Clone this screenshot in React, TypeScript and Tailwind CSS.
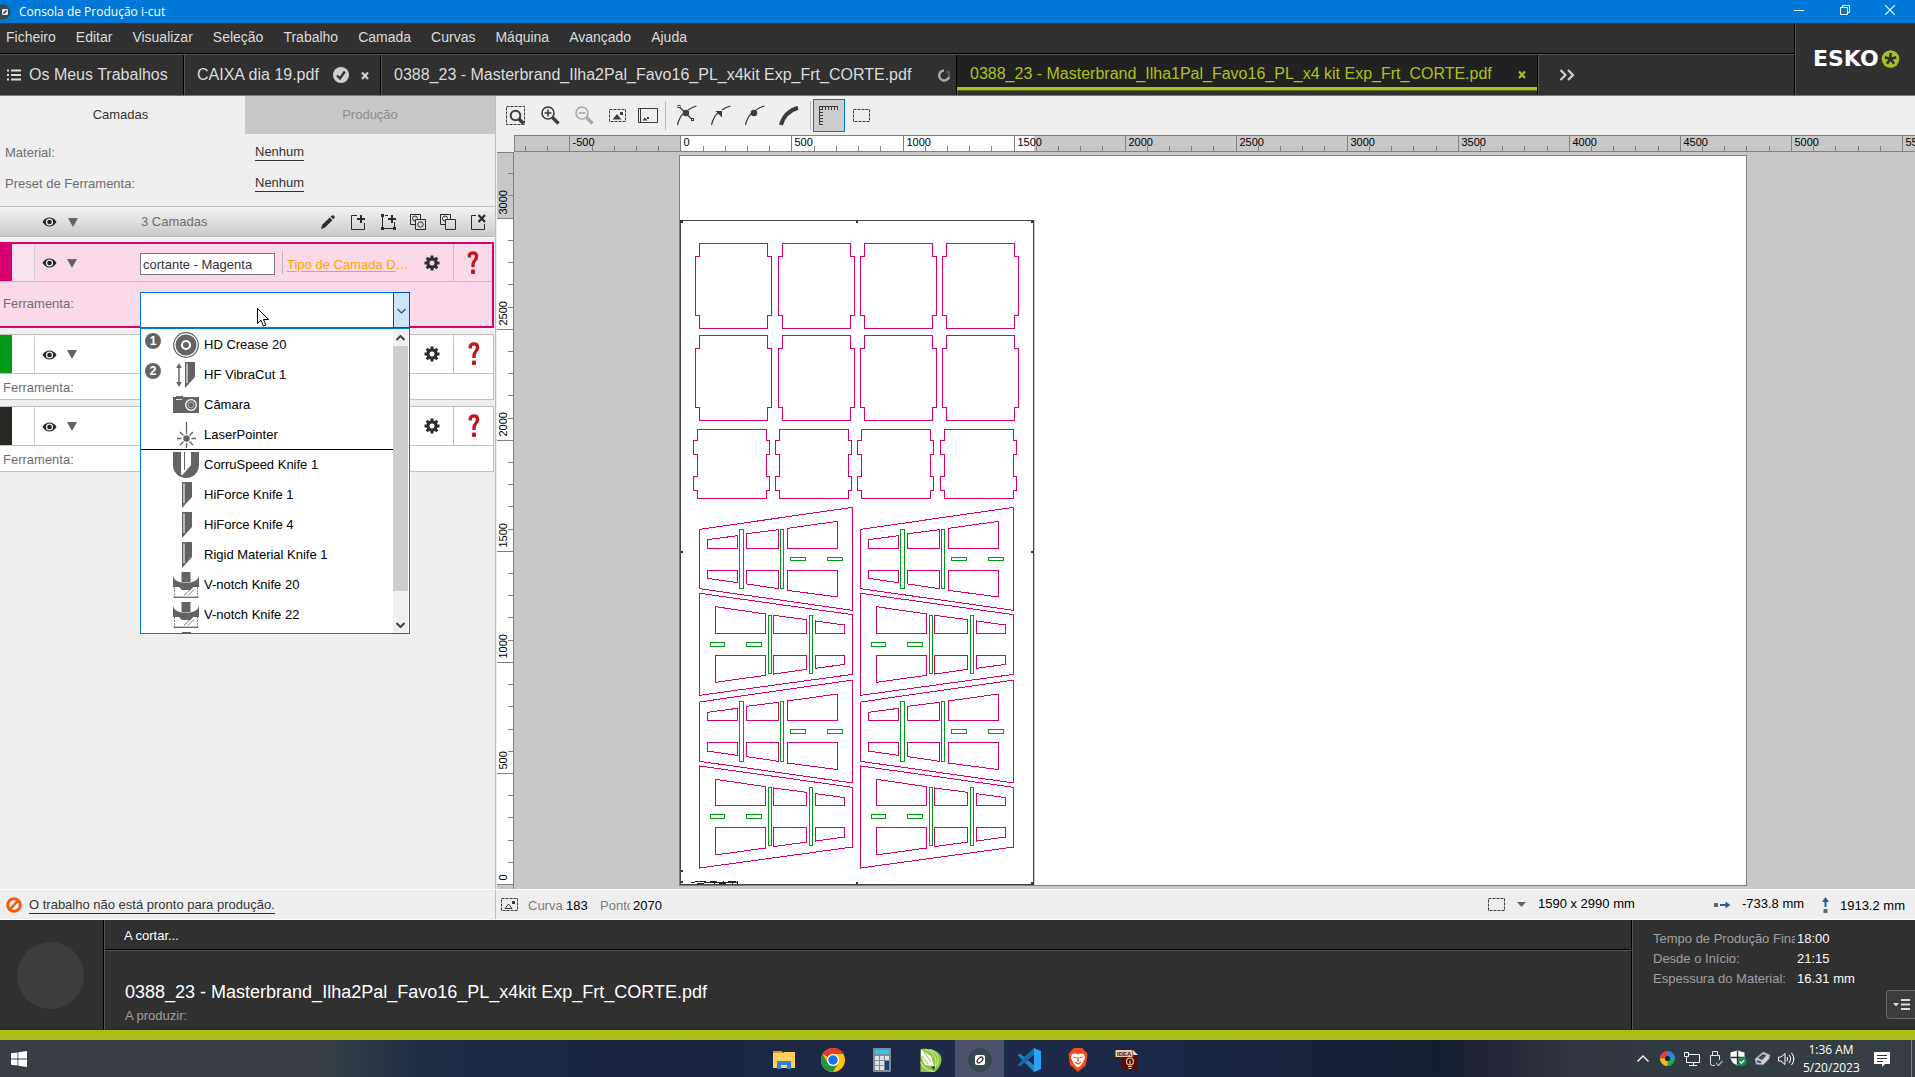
import React from "react";

const ARIAL = "font-['Liberation_Sans',Arial,sans-serif]";
const SEGOE = "font-['Open_Sans','Noto_Sans',sans-serif]";

type Kids = { children?: React.ReactNode };

/* ---------- small icons ---------- */

function Ico({ w, h, children, label }: Kids & { w: number; h: number; label?: string }) {
  return (
    <svg width={w} height={h} viewBox={`0 0 ${w} ${h}`} fill="none" className="block shrink-0" aria-label={label}>
      {children}
    </svg>
  );
}

const Eye = () => (
  <Ico w={15} h={10}>
    <path d="M0.500 5C2.500 1.800 5 0.600 7.500 0.600S12.500 1.800 14.500 5C12.500 8.200 10 9.400 7.500 9.400S2.500 8.200 0.500 5Z" fill="#222" />
    <circle cx="7.500" cy="5" r="3.600" fill="#f0f0f0" />
    <circle cx="7.500" cy="5" r="2.300" fill="#222" />
  </Ico>
);

const Tri = ({ w = 10, h = 9 }: { w?: number; h?: number }) => (
  <Ico w={w} h={h}>
    <path d={`M0 0H${w}L${w / 2} ${h}Z`} fill="#636363" />
  </Ico>
);

const Gear = () => (
  <Ico w={16} h={16}>
    <g stroke="#2e2e2e">
      <circle cx="8" cy="8" r="4.100" strokeWidth="3.200" />
      {[0, 45, 90, 135].map((a) => (
        <g key={a} transform={`rotate(${a} 8 8)`} strokeWidth="3">
          <path d="M8 0.500V3.500M8 12.500V15.500" />
        </g>
      ))}
    </g>
  </Ico>
);

const Question = () => (
  <Ico w={12} h={24}>
    <path d="M2.300 6.500V4.500C2.300 2.700 3.800 1.900 6 1.900C8.300 1.900 9.600 3.200 9.600 5.600C9.600 9.200 6 9.800 6 13.200V16" stroke="#c4141c" strokeWidth="3.300" />
    <rect x="4" y="18.500" width="4" height="4.500" rx="1" fill="#c4141c" />
  </Ico>
);

const Pencil = () => (
  <Ico w={14} h={14}>
    <path d="M0 14L1.200 9.800L8.800 2.600L11.400 5.200L4 12.600Z" fill="#2b2b2b" />
    <path d="M9.700 1.800L11.400 0.300C12.500 0 14 1.500 13.700 2.700L12.200 4.300Z" fill="#2b2b2b" />
  </Ico>
);

const AddLayer = () => (
  <Ico w={16} h={16}>
    <path d="M7 1.500H1.500V15.500H14.500V9" stroke="#2b2b2b" />
    <path d="M11 1V9M7 5H15" stroke="#2b2b2b" strokeWidth="2" />
  </Ico>
);
const AddSel = () => (
  <Ico w={16} h={16}>
    <path d="M2.500 1.500V14M5 1.500H8M2 14.500H15M14.500 15V8" stroke="#2b2b2b" />
    <path d="M1 0H4V3H1ZM1 13H4V16H1ZM13 13H16V16H13Z" fill="#2b2b2b" />
    <path d="M12 1V9M8 5H16" stroke="#2b2b2b" strokeWidth="2" />
  </Ico>
);
const DupLayer = () => (
  <Ico w={16} h={16}>
    <path d="M5 10.500H0.500V0.500H10.500V5M5.500 5.500H15.500V15.500H5.500Z" stroke="#2b2b2b" />
    <path d="M5 7A2.500 2.500 0 1 1 7.500 4.500" stroke="#2b2b2b" />
    <circle cx="10.500" cy="10.500" r="2.700" stroke="#2b2b2b" />
  </Ico>
);
const MoveLayer = () => (
  <Ico w={16} h={16}>
    <path d="M5 10.500H0.500V0.500H10.500V5M5.500 5.500H15.500V15.500H5.500Z" stroke="#2b2b2b" />
    <path d="M5 7A2.500 2.500 0 1 1 7.500 4.500" stroke="#2b2b2b" />
  </Ico>
);
const DelLayer = () => (
  <Ico w={16} h={16}>
    <path d="M6 1.500H1.500V15.500H14.500V10" stroke="#2b2b2b" />
    <path d="M8.500 1L15 8M15 1L8.500 8" stroke="#2b2b2b" strokeWidth="2.200" />
  </Ico>
);

/* ---------- toolbar icons ---------- */

const G = "#3c3c3c";
const ZoomRect = () => (
  <Ico w={20} h={20}>
    <rect x="0.500" y="0.500" width="18" height="18" stroke={G} strokeDasharray="3 1" />
    <circle cx="9.500" cy="9.500" r="4.800" stroke={G} strokeWidth="2" />
    <path d="M13 13L17.500 17.500" stroke={G} strokeWidth="3.500" />
  </Ico>
);
const Zoom = ({ plus, c }: { plus?: boolean; c: string }) => (
  <Ico w={19} h={19}>
    <circle cx="7" cy="7" r="6" stroke={c} strokeWidth="1.600" />
    <path d={plus ? "M3.500 7H10.500M7 3.500V10.500" : "M3.500 7H10.500"} stroke={c} strokeWidth="1.600" />
    <path d="M11.500 11.500L17.500 17.500" stroke={c} strokeWidth="3.400" />
  </Ico>
);
const ImgIcon = () => (
  <Ico w={18} h={14}>
    <rect x="0.500" y="0.500" width="16" height="12" stroke={G} strokeDasharray="3 1" />
    <path d="M3.500 10.500L8 5L12.500 10.500Z" fill={G} />
    <rect x="11" y="3" width="3" height="3" fill={G} />
  </Ico>
);
const PageIcon = () => (
  <Ico w={20} h={16}>
    <path d="M0.500 0.500H19.500V14.500H0.500ZM2.500 0.500V14.500" stroke={G} />
    <path d="M4.500 12.500L7 9.500L9.500 12.500Z" fill={G} />
    <rect x="9" y="9" width="2" height="2" fill={G} />
  </Ico>
);
const Node = ({ kind }: { kind: number }) => (
  <Ico w={20} h={21}>
    <path d="M0.500 20C2 13.500 4.500 10 7 8M11 5C13.500 3 16.500 1.800 19.500 1" stroke={G} strokeWidth="1.200" />
    {kind === 0 && (
      <>
        <path d="M3 2.500L15 14.500" stroke={G} strokeWidth="1.200" />
        <rect x="1" y="0.500" width="2" height="2" stroke={G} />
        <rect x="14.500" y="13.500" width="2" height="2" stroke={G} />
        <circle cx="9" cy="8" r="3.200" fill={G} />
      </>
    )}
    {kind === 1 && <path d="M4.500 6H11V12.500Z" fill={G} />}
    {kind === 2 && <circle cx="9" cy="8" r="3.300" fill={G} />}
  </Ico>
);
const Arc = () => (
  <Ico w={20} h={20}>
    <path d="M2 19C4 11 10 4.500 19 1.800" stroke={G} strokeWidth="4" />
  </Ico>
);
const RulerIcon = () => (
  <Ico w={20} h={20}>
    <path d="M0 0.500H19M0.500 0V19" stroke={G} />
    <path d="M3.500 1V4M6.500 1V4M9.500 1V4M12.500 1V4M15.500 1V4M18.500 1V4M1 3.500H4M1 6.500H4M1 9.500H4M1 12.500H4M1 15.500H4M1 18.500H4" stroke={G} />
  </Ico>
);
const DashRect = () => (
  <Ico w={18} h={14}>
    <rect x="0.500" y="0.500" width="16" height="12" stroke={G} strokeDasharray="3 1" />
  </Ico>
);

/* ---------- tool icons ---------- */

const T = "#636363";
const blade = (x: number) => (
  <>
    <path d={`M${x} 0H${x + 10}V15L${x} 26Z`} fill={T} />
    <path d={`M${x + 2} 1.500V21`} stroke="#e8e8e8" strokeWidth="1.300" />
  </>
);
function ToolIcon({ kind }: { kind: string }) {
  return (
    <Ico w={26} h={26}>
      {kind === "crease" && (
        <>
          <circle cx="13" cy="13" r="12.300" stroke={T} strokeWidth="1.200" />
          <circle cx="13" cy="13" r="10.500" fill={T} />
          <circle cx="13" cy="13" r="4" stroke="#fff" strokeWidth="2" />
        </>
      )}
      {kind === "vibra" && (
        <>
          {blade(12)}
          <path d="M6 3V23" stroke={T} strokeWidth="1.500" />
          <path d="M6 1L8.800 6H3.200ZM6 25L8.800 20H3.200Z" fill={T} />
        </>
      )}
      {kind === "camera" && (
        <>
          <path d="M0 5H3V4H10V5H26V21H0Z" fill={T} />
          <path d="M3 7.500H9" stroke="#ddd" />
          <circle cx="18" cy="13" r="5.300" stroke="#fff" strokeWidth="1.300" />
          <circle cx="18" cy="13" r="2.900" fill={T} stroke="#fff" strokeWidth="0.500" />
        </>
      )}
      {kind === "laser" && (
        <>
          <circle cx="13.500" cy="16.500" r="3.200" fill={T} />
          <path d="M13.500 0V12M13.500 21V26M4 16.500H8.500M18.500 16.500H23M7 10L10.500 13.500M20 10L16.500 13.500M7 23L10.500 19.500M20 23L16.500 19.500" stroke={T} strokeWidth="1.300" />
        </>
      )}
      {kind === "corru" && (
        <>
          <path d="M0 0H26V13A13 13 0 0 1 0 13Z" fill={T} />
          <path d="M8 0H18V13L9 23.500L8 22Z" fill="#fff" />
          <path d="M11.500 0V18" stroke={T} />
        </>
      )}
      {kind === "knife" && blade(9)}
      {kind === "vnotch" && (
        <>
          <path d="M8.500 0H17.500V10H8.500Z" fill={T} />
          <path d="M0 3.500C1 8 4 9.500 8.500 10.500H17.500C22 9.500 25 8 26 3.500V15H20L17 18H9L6 15H0Z" fill={T} />
          <path d="M1.500 15V25M24.500 15V25" stroke="#888" strokeDasharray="2 1" />
          <path d="M11 23.500L20 15M15 23.500L21 17.500" stroke="#777" />
          <path d="M0.500 25.300H25.500" stroke="#666" strokeWidth="1.300" />
        </>
      )}
    </Ico>
  );
}

/* ---------- header ---------- */

function TitleBar() {
  return (
    <div className="flex h-[23px] shrink-0 items-center bg-[#0078d7] text-white">
      <Ico w={11} h={16}>
        <circle cx="3" cy="8" r="7.500" fill="#3c484c" />
        <rect x="2" y="5" width="6" height="6" rx="1" fill="#e8e8e8" />
        <path d="M3.500 9.500L6.500 6.500" stroke="#333" strokeWidth="1.500" />
      </Ico>
      <span className={`${SEGOE} ml-2 text-xs`}>Consola de Produção i-cut</span>
      <div className="ml-auto flex h-full pb-[3px]">
        <button aria-label="Minimizar" className="grid w-[46px] place-items-center"><Ico w={10} h={10}><path d="M0 5.500H10" stroke="#fff" /></Ico></button>
        <button aria-label="Restaurar" className="grid w-[45px] place-items-center"><Ico w={10} h={10}><path d="M0.500 2.500H7.500V9.500H0.500ZM2.500 2.500V0.500H9.500V7.500H7.500" stroke="#fff" /></Ico></button>
        <button aria-label="Fechar" className="mr-[2px] grid w-[46px] place-items-center"><Ico w={10} h={10}><path d="M0.300 0.300L9.700 9.700M9.700 0.300L0.300 9.700" stroke="#fff" strokeWidth="1.100" /></Ico></button>
      </div>
    </div>
  );
}

const MENU = ["Ficheiro", "Editar", "Visualizar", "Seleção", "Trabalho", "Camada", "Curvas", "Máquina", "Avançado", "Ajuda"];

function CloseX({ c = "#d0d0d0" }: { c?: string }) {
  return (
    <button aria-label="Fechar separador" className="grid h-5 w-3 place-items-center">
      <Ico w={8} h={9}><path d="M1 1.500L7 8M7 1.500L1 8" stroke={c} strokeWidth="2.200" /></Ico>
    </button>
  );
}

const tabCls = "flex items-center border-r border-black pl-[13px] pr-3 shadow-[1px_0_0_#555] whitespace-nowrap";

function Header() {
  return (
    <div className="flex h-[73px] shrink-0 border-b border-[#777] bg-[#303030] text-[#dcdcdc]">
      <div className="flex min-w-0 flex-1 flex-col">
        <nav className="flex h-[31px] items-center gap-5 border-b border-black pb-[2px] pl-[6px] text-sm">
          {MENU.map((m) => (
            <button key={m}>{m}</button>
          ))}
        </nav>
        <div className="flex flex-1 border-t border-[#555] text-base">
          <div className="flex w-[184px] items-center border-r border-black pl-[7px] shadow-[1px_0_0_#555]">
            <Ico w={14} h={12}>
              <path d="M0 1.500H2M4 1.500H14M0 6H2M4 6H14M0 10.500H2M4 10.500H14" stroke="#dcdcdc" strokeWidth="1.800" />
            </Ico>
            <button className="ml-2 whitespace-nowrap pb-px">Os Meus Trabalhos</button>
          </div>
          <div className={`${tabCls} w-[197px]`}>
            <button className="pb-px">CAIXA dia 19.pdf</button>
            <span className="ml-[14px] mr-3">
              <Ico w={16} h={16}>
                <circle cx="8" cy="8" r="8" fill="#cfcfcf" />
                <path d="M4 8.500L7 11.500L11.800 4.500" stroke="#333" strokeWidth="2.400" />
              </Ico>
            </span>
            <CloseX />
          </div>
          <div className={`${tabCls} w-[576px]`}>
            <button className="pb-px">0388_23 - Masterbrand_Ilha2Pal_Favo16_PL_x4kit Exp_Frt_CORTE.pdf</button>
            <span className="ml-auto -mr-2">
              <Ico w={15} h={15}>
                <path d="M7 2.500A5 5 0 1 0 12 9" stroke="#aaa" strokeWidth="2.500" />
                <path d="M12 9A5 5 0 0 0 9.500 3.200" stroke="#5a5a5a" strokeWidth="2.500" />
              </Ico>
            </span>
          </div>
          <div className="flex w-[581px] flex-col border-r border-black shadow-[1px_0_0_#555]">
            <div className="flex flex-1 items-center whitespace-nowrap border-b-[3px] border-[#adc11b] bg-[#212121] pl-[13px] pr-[9px] pt-[6px] text-[#adc11b]">
              <button>0388_23 - Masterbrand_Ilha1Pal_Favo16_PL_x4 kit Exp_Frt_CORTE.pdf</button>
              <span className="ml-auto flex"><CloseX c="#adc11b" /></span>
            </div>
            <div className="h-[5px] border-t border-[#5f6a10]" />
          </div>
          <button aria-label="Mais separadores" className="pl-[21px]">
            <Ico w={16} h={12}>
              <path d="M1.500 1L6.500 6L1.500 11M9 1L14 6L9 11" stroke="#cfcfcf" strokeWidth="2.200" />
            </Ico>
          </button>
        </div>
      </div>
      <div className="flex w-[121px] shrink-0 items-center border-l border-black pl-[18px] shadow-[inset_1px_0_0_#555]">
        <span className="font-['DejaVu_Sans',sans-serif] text-[22px] font-bold leading-6 text-white">ESKO</span>
        <Ico w={22} h={18}>
          <circle cx="11.500" cy="9" r="8.800" fill="#a5bf2b" />
          {[0, 72, 144, 216, 288].map((a) => (
            <path key={a} d="M11.500 9V3" stroke="#303030" strokeWidth="2.600" transform={`rotate(${a} 11.500 9)`} />
          ))}
        </Ico>
      </div>
    </div>
  );
}

/* ---------- layers panel ---------- */

const TOOLS: { name: string; kind: string; badge?: number }[] = [
  { name: "HD Crease 20", kind: "crease", badge: 1 },
  { name: "HF VibraCut 1", kind: "vibra", badge: 2 },
  { name: "Câmara", kind: "camera" },
  { name: "LaserPointer", kind: "laser" },
  { name: "CorruSpeed Knife 1", kind: "corru" },
  { name: "HiForce Knife 1", kind: "knife" },
  { name: "HiForce Knife 4", kind: "knife" },
  { name: "Rigid Material Knife 1", kind: "knife" },
  { name: "V-notch Knife 20", kind: "vnotch" },
  { name: "V-notch Knife 22", kind: "vnotch" },
];

const Chevron = ({ up, bold }: { up?: boolean; bold?: boolean }) => (
  <Ico w={9} h={6}>
    <path d={up ? "M0.500 5L4.500 1L8.500 5" : "M0.500 1L4.500 5L8.500 1"} stroke="#444" strokeWidth={bold ? 2 : 1.1} />
  </Ico>
);

function ToolPicker() {
  return (
    <div className="absolute left-[140px] top-[10px] z-10 w-[270px]">
      <div className="relative h-9 border border-[#0078d7] bg-white">
        <select id="tool-1" className="h-full w-full appearance-none bg-white outline-none">
          <option value=""></option>
        </select>
        <span className="pointer-events-none absolute -right-px -top-px grid h-9 w-[17px] place-items-center border border-[#005499] bg-[#cce4f7] pt-[2px]">
          <Chevron />
        </span>
      </div>
      <div className="-mt-px flex h-[307px] overflow-hidden border border-t-2 border-[#0078d7] bg-white">
        <ul role="listbox" aria-label="Ferramentas" className="flex-1 pt-px text-[13px] text-black">
          {TOOLS.map((t, i) => (
            <li key={t.name} role="option" aria-selected={false} className={`flex h-[30px] pt-[2px] ${i === 4 ? "shadow-[0_-1px_0_#000]" : ""}`}>
              <span className="flex w-8 pl-1">
                {t.badge && (
                  <span className="mt-px grid h-4 w-4 place-items-center rounded-full bg-[#636363] text-xs font-bold leading-none text-white">{t.badge}</span>
                )}
              </span>
              <ToolIcon kind={t.kind} />
              <span className="ml-[5px] leading-[26px]">{t.name}</span>
            </li>
          ))}
          <li className="flex justify-start pl-[41px] pt-[2px]"><span className="h-3 w-[9px] bg-[#636363]" /></li>
        </ul>
        <div className="mr-px flex w-[15px] flex-col items-center bg-[#f0f0f0]">
          <span className="grid h-[17px] place-items-center"><Chevron up bold /></span>
          <span className="h-[245px] w-full bg-[#cdcdcd]" />
          <span className="mt-[31px]"><Chevron bold /></span>
        </div>
      </div>
    </div>
  );
}

function Layer({ swatch, active, n }: { swatch: string; active?: boolean; n: number }) {
  return (
    <section className={active ? "relative border-y-2 border-r-2 border-[#d6006f] bg-[#fad9e9]" : "border-y border-r border-[#c0c0c0] bg-white"}>
      <div className={`flex items-stretch border-b border-[#c0c0c0] ${active ? "h-[38px]" : "h-[39px]"}`}>
        <span className={`w-3 ${swatch}`} />
        <span className={`w-[23px] border-r border-[#d5cdd1] ${active ? "bg-[#f8e2ee]" : ""}`} />
        <button aria-label="Visibilidade" className="grid w-[29px] place-items-center pt-px"><Eye /></button>
        <button aria-label="Expandir" className="grid w-[15px] place-items-center pt-px"><Tri /></button>
        <span className="w-[61px]" />
        {active ? (
          <>
            <input
              aria-label="Nome da camada"
              defaultValue="cortante - Magenta"
              className="mt-[9px] h-[22px] w-[135px] border border-[#777] bg-white px-[2px] text-[13px] text-[#333] outline-none"
            />
            <span className="ml-[7px] mt-[7px] h-[23px] w-px bg-[#c0b4ba]" />
            <a href="#tipo" className="ml-1 mt-[11px] w-[123px] overflow-hidden whitespace-nowrap text-[13px] text-[#ffa500]">
              <span className="underline underline-offset-2">Tipo de Camada D</span>…
            </a>
          </>
        ) : (
          <span className="w-[270px]" />
        )}
        <button aria-label="Definições" className="ml-auto grid w-[42px] place-items-center"><Gear /></button>
        <button aria-label="Ajuda da camada" className={`grid place-items-center border-l border-[#c0c0c0] ${active ? "w-[39px]" : "w-10"}`}><Question /></button>
      </div>
      <div className={active ? "relative h-11" : "h-[25px]"}>
        <label htmlFor={`tool-${n}`} className={`block pl-[3px] text-[13px] text-[#6e6e6e] ${active ? "pt-3" : "pt-1"}`}>Ferramenta:</label>
        {active && <ToolPicker />}
        {active && (
          <span className="pointer-events-none absolute left-[257px] top-[26px] z-20">
            <Ico w={12} h={19}>
              <path d="M0.500 0.500V15.500L4 12.200L6.500 18L9 17L6.500 11.500H11.500Z" fill="#fff" stroke="#000" />
            </Ico>
          </span>
        )}
      </div>
    </section>
  );
}

function PresetRow({ label }: { label: string }) {
  return (
    <div className="flex h-[31px] items-center">
      <span className="w-[250px] text-[#6e6e6e]">{label}</span>
      <a href="#preset" className="border-b border-[#333] leading-4 text-[#333]">Nenhum</a>
    </div>
  );
}

function Panel() {
  const actions = [
    { l: "Editar", i: <Pencil /> },
    { l: "Nova camada", i: <AddLayer /> },
    { l: "Camada da seleção", i: <AddSel /> },
    { l: "Duplicar", i: <DupLayer /> },
    { l: "Mover", i: <MoveLayer /> },
    { l: "Eliminar", i: <DelLayer /> },
  ];
  return (
    <aside className="w-[496px] shrink-0 border-r border-[#bdbdbd] bg-[#efefef] text-[13px]">
      <div className="flex h-[38px]">
        <button className="w-[245px] pr-1 text-[#333]">Camadas</button>
        <button className="flex-1 bg-[#c8c8c8] text-[#8c8c8c]">Produção</button>
      </div>
      <div className="border-b border-[#bdbdbd] pb-[7px] pl-[5px] pt-[3px]">
        <PresetRow label="Material:" />
        <PresetRow label="Preset de Ferramenta:" />
      </div>
      <div className="flex h-[30px] border-b border-[#b8b8b8] bg-linear-to-b from-[#f4f4f4] to-[#cacaca] pl-[35px] pr-[2px]">
        <button aria-label="Visibilidade de todas" className="grid w-[29px] place-items-center pt-px"><Eye /></button>
        <button aria-label="Expandir todas" className="grid w-[17px] place-items-center pt-px"><Tri /></button>
        <span className="ml-[60px] self-center pt-px text-[#6e6e6e]">3 Camadas</span>
        <div className="ml-auto flex">
          {actions.map((a) => (
            <button key={a.l} aria-label={a.l} className="grid w-[30px] place-items-center">{a.i}</button>
          ))}
        </div>
      </div>
      <div className="mr-px flex flex-col gap-[6px] border-t border-white pt-[4px]">
        <Layer n={1} active swatch="bg-[#d6006f]" />
        <Layer n={2} swatch="bg-[#009a17]" />
        <Layer n={3} swatch="bg-[#2a2925]" />
      </div>
    </aside>
  );
}

/* ---------- drawing area ---------- */

function Toolbar() {
  const b = "grid w-[34px] place-items-center";
  return (
    <div className="flex h-[39px] shrink-0 items-stretch bg-[#efefef] pl-[2px]">
      <button aria-label="Zoom à seleção" className={b}><ZoomRect /></button>
      <button aria-label="Ampliar" className={b}><Zoom plus c={G} /></button>
      <button aria-label="Reduzir" className={b}><Zoom c="#a8a8a8" /></button>
      <button aria-label="Ajustar desenho" className={b}><ImgIcon /></button>
      <button aria-label="Ajustar mesa" className="grid w-[26px] place-items-center"><PageIcon /></button>
      <span className="mx-1 my-[5px] w-px bg-[#bbb]" />
      <button aria-label="Nó suave" className={b}><Node kind={0} /></button>
      <button aria-label="Nó de canto" className={b}><Node kind={1} /></button>
      <button aria-label="Nó simples" className={b}><Node kind={2} /></button>
      <button aria-label="Curva" className={b}><Arc /></button>
      <span className="my-[5px] ml-1 mr-[2px] w-px bg-[#bbb]" />
      <button aria-label="Réguas" aria-pressed="true" className="my-[3px] grid w-8 place-items-center border border-[#0078d7] bg-[#cccccc]"><RulerIcon /></button>
      <button aria-label="Seleção" className={b}><DashRect /></button>
    </div>
  );
}

const PX = 0.2221;

function HRuler() {
  const ticks: number[] = [];
  for (let v = -700; v <= 5900; v += 100) ticks.push(v);
  return (
    <svg className="block h-[17px] w-full bg-[#c8c8c8]" shapeRendering="crispEdges">
      <rect x="167" y="0" width="353" height="17" fill="#fff" />
      <path d="M0 0.500H3000M0 16.500H3000M0.500 0V17" stroke="#808080" />
      {ticks.map((v) => {
        const x = Math.round(166.4 + v * PX) + 0.5;
        const major = v % 500 === 0;
        return (
          <g key={v}>
            <path d={`M${x} ${major ? 0 : 11}V16`} stroke="#808080" />
            {major && <text x={x + 3} y="11" fontSize="11" fill="#000">{v}</text>}
          </g>
        );
      })}
    </svg>
  );
}

function VRuler() {
  const ticks: number[] = [];
  for (let v = 0; v <= 3200; v += 100) ticks.push(v);
  return (
    <svg className="block w-[17px] shrink-0 bg-[#c8c8c8]" shapeRendering="crispEdges">
      <rect x="0" y="67" width="17" height="665" fill="#fff" />
      <path d="M16.500 0V3000M0 0.500H17" stroke="#808080" />
      {ticks.map((v) => {
        const y = Math.round(732 - v * PX) + 0.5;
        const major = v % 500 === 0;
        return (
          <g key={v}>
            <path d={`M${major ? 0 : 11} ${y}H16`} stroke="#808080" />
            {major && <text transform={`translate(10 ${y - 4}) rotate(-90)`} fontSize="11" fill="#000">{v}</text>}
          </g>
        );
      })}
    </svg>
  );
}

const TRAP_UP = [
  "89,118 548,52 548,361 89,296",
  "112,149 203,137 203,175 112,175",
  "112,241 203,241 203,278 112,265",
  "230,131 326,119 326,175 230,175",
  "230,241 326,241 326,296 230,282",
  "352,115 503,94 503,175 352,175",
  "352,241 503,241 503,321 352,301",
];
const SLOT_UP = ["208,118 220,118 220,296 208,296", "331,118 341,118 341,296 331,296", "361,202 407,202 407,212 361,212", "472,202 518,202 518,212 472,212"];
const TRAP_DN = [
  "89,310 548,374 548,553 89,616",
  "136,350 287,372 287,430 136,430",
  "136,496 287,496 287,556 136,577",
  "311,376 410,389 410,430 311,430",
  "311,496 410,496 410,538 311,552",
  "437,393 524,405 524,430 437,430",
  "437,496 524,496 524,523 437,535",
];
const SLOT_DN = ["295,376 305,376 305,550 295,550", "418,376 428,376 428,550 418,550", "121,457 164,457 164,469 121,469", "229,457 275,457 275,469 229,469"];

function Drawing() {
  return (
    <svg className="block min-w-0 flex-1 bg-[#c8c8c8]" shapeRendering="crispEdges" fill="none" aria-label="Desenho">
      <rect x="165.500" y="3.500" width="1067" height="730" fill="#fff" stroke="#808080" />
      <rect x="166.500" y="68.500" width="353" height="664" stroke="#444" />
      <path d="M520.500 68V733" stroke="#ccc" />
      <path d="M166 68H169V71H166ZM342 69H344V71H342ZM517 69H519V71H517ZM167 399H169V401H167ZM517 399H519V401H517ZM167 718H169V720H167ZM167 729H169V731H167ZM342 730H344V732H342ZM517 730H519V732H517Z" fill="#333" />
      <path d="M177 730.500H181M181 729.500H192M183 731.500H190M190 730.500H224M196 729.500H203M200 732V729M205 731.500H212M214 729.500H222M223.500 729V733M209 729V732M218 730V732" stroke="#222" />
      <g stroke="#d6006f">
        {[0, 92].map((dy) =>
          [0, 83, 165, 247].map((dx) => (
            <path key={`${dx}-${dy}`} transform={`translate(${dx} ${dy})`} d="M185.500 91.500H253.500V104.500H257.500V163.500H253.500V176.500H185.500V163.500H181.500V104.500H185.500Z" />
          ))
        )}
        {[0, 82, 164, 247].map((dx) => (
          <path key={dx} transform={`translate(${dx} 0)`} d="M183.500 277.500H252.500V288.500H255.500V302.500H252.500V324.500H255.500V338.500H252.500V346.500H183.500V338.500H179.500V324.500H183.500V302.500H179.500V288.500H183.500Z" />
        ))}
      </g>
      {[0, 518].map((dy) =>
        [0, 483].map((dx) => (
          <g key={`${dx}-${dy}`} transform={`translate(${156 + dx / 3} ${338 + dy / 3}) scale(0.33333)`}>
            {[...TRAP_UP, ...TRAP_DN].map((p) => (
              <polygon key={p} points={p} stroke="#d6006f" vectorEffect="non-scaling-stroke" />
            ))}
            {[...SLOT_UP, ...SLOT_DN].map((p) => (
              <polygon key={p} points={p} stroke="#009a17" vectorEffect="non-scaling-stroke" />
            ))}
          </g>
        ))
      )}
    </svg>
  );
}

function Workspace() {
  return (
    <main className="ml-px flex min-w-0 flex-1 flex-col bg-[#efefef]">
      <Toolbar />
      <div className="shrink-0 overflow-hidden pl-[17px]"><HRuler /></div>
      <div className="flex min-h-0 flex-1">
        <VRuler />
        <Drawing />
      </div>
    </main>
  );
}

/* ---------- status and production ---------- */

function StatusBar() {
  return (
    <div className="flex h-[31px] shrink-0 border-y border-white bg-[#efefef] text-[13px] text-black">
      <div className="flex w-[496px] shrink-0 items-center gap-[7px] border-r border-[#bdbdbd] pl-[6px] pt-px">
        <Ico w={16} h={16}>
          <circle cx="8" cy="8" r="6.300" stroke="#f4590b" strokeWidth="3" />
          <path d="M4.500 12L11.500 4" stroke="#f4590b" strokeWidth="2.600" />
        </Ico>
        <a href="#estado" className="border-b border-[#333] leading-4 text-[#333]">O trabalho não está pronto para produção.</a>
      </div>
      <div className="flex flex-1 items-center pl-[5px]">
        <Ico w={18} h={14}>
          <rect x="0.500" y="0.500" width="16" height="12" stroke={G} strokeDasharray="3 1" />
          <path d="M4 10.500L7.500 6L11 10.500Z" stroke={G} />
          <rect x="11" y="3" width="3" height="3" fill={G} />
        </Ico>
        <span className="ml-[9px] w-9 overflow-hidden whitespace-nowrap pt-[3px] text-[#7a7a7a]">Curva:</span>
        <span className="ml-[2px] w-[34px] pt-[3px]">183</span>
        <span className="w-[30px] overflow-hidden whitespace-nowrap pt-[3px] text-[#7a7a7a]">Pontos:</span>
        <span className="ml-[3px] pt-[3px]">2070</span>
        <span className="ml-auto"><DashRect /></span>
        <button aria-label="Unidades" className="ml-[11px]"><Tri w={9} h={5} /></button>
        <span className="ml-3 w-[176px] whitespace-nowrap pb-px">1590 x 2990 mm</span>
        <Ico w={17} h={8}>
          <path d="M0 2H4V6H0Z" fill="#666" />
          <path d="M6 4H12" stroke="#2b5c9b" strokeWidth="2" />
          <path d="M11.500 0.500L16.500 4L11.500 7.500Z" fill="#2b5c9b" />
        </Ico>
        <span className="ml-[11px] w-20 whitespace-nowrap pb-px">-733.8 mm</span>
        <Ico w={7} h={16}>
          <path d="M1.500 12H5.500V16H1.500Z" fill="#666" />
          <path d="M3.500 10V4" stroke="#2b5c9b" strokeWidth="2" />
          <path d="M0 5L3.500 0L7 5Z" fill="#2b5c9b" />
        </Ico>
        <span className="ml-[11px] mr-[10px] whitespace-nowrap pt-[2px]">1913.2 mm</span>
      </div>
    </div>
  );
}

function Production() {
  const rows = [
    ["Tempo de Produção Final:", "18:00"],
    ["Desde o Início:", "21:15"],
    ["Espessura do Material:", "16.31 mm"],
  ];
  return (
    <div className="flex h-[110px] shrink-0 bg-[#303030] text-[13px] text-white">
      <div className="grid w-[104px] place-items-center border-r border-black pr-[3px] shadow-[1px_0_0_#555]">
        <span className="h-[67px] w-[67px] rounded-full bg-[#3d3d3d]" />
      </div>
      <div className="ml-px flex flex-1 flex-col">
        <div className="flex h-[30px] items-center border-b border-black pl-[19px] pt-[3px]">A cortar...</div>
        <div className="flex-1 border-t border-[#555] pl-5 pt-[30px]">
          <div className="text-lg leading-[22px]">0388_23 - Masterbrand_Ilha2Pal_Favo16_PL_x4kit Exp_Frt_CORTE.pdf</div>
          <div className="mt-[3px] leading-5 text-[#a0a0a0]">A produzir:</div>
        </div>
      </div>
      <div className="relative w-[284px] shrink-0 border-l border-black pl-[21px] pt-[9px] shadow-[inset_1px_0_0_#555]">
        {rows.map(([k, v]) => (
          <div key={k} className="flex h-5 items-center">
            <span className="w-[142px] overflow-hidden whitespace-nowrap text-[#a0a0a0]">{k}</span>
            <span className="ml-[2px]">{v}</span>
          </div>
        ))}
        <button aria-label="Opções" className="absolute right-0 top-[70px] grid h-[29px] w-[29px] place-items-center rounded-l border border-r-0 border-[#6a6a6a] bg-[#3c3c3c]">
          <Ico w={17} h={11}>
            <path d="M0 4H6L3 7.500Z" fill="#dcdcdc" />
            <path d="M8 1H17M8 5.500H17M8 10H17" stroke="#dcdcdc" strokeWidth="2" />
          </Ico>
        </button>
      </div>
    </div>
  );
}

/* ---------- taskbar ---------- */

const APPS: { name: string; icon: React.ReactNode; active?: boolean }[] = [
  {
    name: "Explorador",
    icon: (
      <Ico w={24} h={24}>
        <path d="M1 3H10L11 5H1Z" fill="#e19b16" />
        <path d="M1 5H11L12 4H23V20H1Z" fill="#fcd05c" />
        <path d="M5 21V13H19V21H15V17H9V21Z" fill="#2b88d8" />
      </Ico>
    ),
  },
  {
    name: "Chrome",
    icon: (
      <Ico w={24} h={24}>
        <circle cx="12" cy="12" r="12" fill="#fbc116" />
        <path d="M1.600 6A12 12 0 0 1 22.400 6H12A6 6 0 0 0 6.800 9Z" fill="#e33b2e" />
        <path d="M1.600 6A12 12 0 0 0 12 24L17.200 15A6 6 0 0 1 6.800 15Z" fill="#229342" />
        <circle cx="12" cy="12" r="6" fill="#fff" />
        <circle cx="12" cy="12" r="4.700" fill="#1a73e8" />
      </Ico>
    ),
  },
  {
    name: "Calculadora",
    icon: (
      <Ico w={18} h={24}>
        <rect width="18" height="24" rx="1" fill="#7f8a93" />
        <rect x="2" y="2" width="14" height="4" fill="#32c5f4" />
        <path d="M2 8H6V12H2ZM7 8H11V12H7ZM12 8H16V12H12ZM2 13H6V17H2ZM7 13H11V17H7ZM2 18H6V22H2ZM7 18H11V22H7Z" fill="#dfe3e6" />
        <rect x="12" y="13" width="4" height="9" fill="#14427c" />
      </Ico>
    ),
  },
  {
    name: "CorelDRAW",
    icon: (
      <Ico w={22} h={24}>
        <path d="M0.500 1C10 0 21.500 3 21.500 11C21.500 17 18 21 15 24H0.500Z" fill="#8cc63e" />
        <path d="M10 1.500C17 4 20 9 17 18M5 1C14 4 18 10 15 20M0.500 14C3 20 8 22 14 24" stroke="#c9e59b" strokeWidth="1.200" />
        <path d="M1 2L11 8L14 18L5 17L1 8Z" fill="#fff" />
        <path d="M4 4L11 14M2 8L8 16" stroke="#8cc63e" />
        <path d="M11 19L15 18L14 22Z" fill="#333" />
      </Ico>
    ),
  },
  {
    name: "i-cut",
    active: true,
    icon: (
      <Ico w={24} h={24}>
        <circle cx="12" cy="12" r="12" fill="#37474f" />
        <rect x="7" y="7" width="10" height="10" rx="2" fill="#fff" />
        <ellipse cx="12" cy="12" rx="3.500" ry="2" transform="rotate(-45 12 12)" stroke="#333" strokeWidth="1.300" />
      </Ico>
    ),
  },
  {
    name: "VS Code",
    icon: (
      <Ico w={24} h={24}>
        <path d="M17 0L7.500 9L3 5.500L0.500 7L17 24Z" fill="#1f80cc" />
        <path d="M0.500 17L3 18.500L17 7V0Z" fill="#0f69b0" />
        <path d="M17 0L24 3V21L17 24Z" fill="#2aa3f4" />
        <path d="M17 7V17L10.500 12Z" fill="#1d2946" />
      </Ico>
    ),
  },
  {
    name: "Brave",
    icon: (
      <Ico w={20} h={24}>
        <path d="M6 0H14L17 3L19.500 6L18 17L10 24L2 17L0.500 6L3 3Z" fill="#f9491b" />
        <path d="M4 6L8 5.500L10 6.500L12 5.500L16 6L17 10L14.500 15L13 17.500L10 19.500L7 17.500L5.500 15L3 10Z" fill="#fff" />
        <path d="M5.500 9L8.500 10M14.500 9L11.500 10M10 9V14M7 14L10 16L13 14" stroke="#f9491b" strokeWidth="1.300" />
      </Ico>
    ),
  },
  {
    name: "IDEA",
    icon: (
      <Ico w={24} h={24}>
        <path d="M7 2H18L23 7V22H7Z" fill="#5c0c06" />
        <path d="M18 2L23 7H18Z" fill="#f6d0b6" />
        <rect x="0.500" y="2" width="17" height="7" fill="#f6c8ab" />
        <text x="2" y="8" fontSize="6" fontWeight="700" fill="#4a0905">IDEA</text>
        <circle cx="15" cy="13.500" r="3.500" stroke="#f1bfa0" strokeWidth="1.200" />
        <path d="M13 18.500H17M13.500 20.500H16.500M15 12.500V17" stroke="#f1bfa0" strokeWidth="1.200" />
      </Ico>
    ),
  },
];

function Taskbar() {
  return (
    <div className="grid h-[37px] shrink-0 grid-cols-[1fr_auto_1fr] bg-[linear-gradient(90deg,#363f46_0%,#363f46_17%,#1f2d45_22%,#19233f_33%,#1e2b48_50%,#1b2746_60%,#151d31_75%,#2e373f_82%,#373f46_100%)] text-white">
      <button aria-label="Iniciar" className="flex items-center pl-[11px]">
        <Ico w={16} h={16}>
          <path d="M0 2.300L6.500 1.400V7.600H0ZM7.300 1.300L16 0V7.600H7.300ZM0 8.400H6.500V14.600L0 13.700ZM7.300 8.400H16V16L7.300 14.700Z" fill="#fff" />
        </Ico>
      </button>
      <div className="flex pr-[5px]">
        {APPS.map((a) => (
          <button key={a.name} aria-label={a.name} className={`grid w-[49px] place-items-center pt-[2px] ${a.active ? "bg-[#4a5069]" : ""}`}>
            {a.icon}
          </button>
        ))}
      </div>
      <div className="flex items-center justify-end">
        <Ico w={12} h={7}><path d="M0.500 6.500L6 1L11.500 6.500" stroke="#fff" strokeWidth="1.300" /></Ico>
        <span className="ml-[11px]">
          <Ico w={15} h={15}>
            <circle cx="7.500" cy="7.500" r="5" stroke="#18b04e" strokeWidth="5" />
            <path d="M7.500 2.500A5 5 0 0 1 12.500 7.500" stroke="#2f80ed" strokeWidth="5" />
            <path d="M2.500 7.500A5 5 0 0 1 7.500 2.500" stroke="#ef3b2d" strokeWidth="5" />
            <path d="M7.500 12.500A5 5 0 0 1 2.500 7.500" stroke="#fdb813" strokeWidth="5" />
            <circle cx="7.500" cy="7.500" r="2.500" fill="#20242c" />
          </Ico>
        </span>
        <span className="ml-2">
          <Ico w={17} h={16}>
            <path d="M5 3.500H16.500V11.500H3.500V8M10.500 11.500V14.500M6 14.500H14M1.500 1.500H5.500V5.500H1.500ZM3.500 6V9" stroke="#fff" />
          </Ico>
        </span>
        <span className="ml-[9px]">
          <Ico w={14} h={17}>
            <path d="M3.500 5V1.500H8.500V5M1.500 5.500H10.500V10M1.500 5.500V13.500A2 2 0 0 0 3.500 15.500H6" stroke="#e6e6e6" />
            <path d="M7 13L9.500 15.500L13.500 11" stroke="#aaa" strokeWidth="1.300" />
          </Ico>
        </span>
        <span className="ml-[7px]">
          <Ico w={17} h={17}>
            <path d="M7.500 0.500L14.500 2.500V7C14.500 11 11.500 14 7.500 15.500C3.500 14 0.500 11 0.500 7V2.500Z" fill="#fff" />
            <path d="M7.500 1V15M1 7.500H14" stroke="#222" strokeWidth="1.300" />
            <circle cx="12" cy="11.500" r="4.500" fill="#17904a" />
            <path d="M9.800 11.500L11.500 13.200L14.200 10.200" stroke="#fff" strokeWidth="1.200" />
          </Ico>
        </span>
        <span className="ml-[7px]">
          <Ico w={17} h={16}>
            <path d="M1 8L9 1L16 4L15 8L9 14L2 13Z" fill="#cfcfcf" stroke="#888" />
            <path d="M4 7L9 3L12.500 4.500L8 9Z" fill="#444" />
            <path d="M3 10L7 11.500" stroke="#2b49d0" strokeWidth="2" />
          </Ico>
        </span>
        <span className="ml-[7px]">
          <Ico w={17} h={14}>
            <path d="M0.500 5H3L7 1.500V12.500L3 9H0.500Z" stroke="#fff" />
            <path d="M9 5A3.500 3.500 0 0 1 9 9M11 3A6 6 0 0 1 11 11M13.500 1A9 9 0 0 1 13.500 13" stroke="#fff" strokeWidth="1.100" />
          </Ico>
        </span>
        <div className={`${SEGOE} ml-2 w-[56px] pt-px text-center text-xs leading-[18px]`}>
          <div>1:36 AM</div>
          <div>5/20/2023</div>
        </div>
        <button aria-label="Notificações" className="ml-[15px] mr-[21px] pt-px">
          <Ico w={16} h={16}>
            <path d="M0 1H16V13H11L8 16V13H0Z" fill="#fff" />
            <path d="M3 4.500H13M3 7.500H13M3 10.500H9" stroke="#333" />
          </Ico>
        </button>
        <span className="mr-[3px] h-full w-px bg-[#7b8187]" />
      </div>
    </div>
  );
}

export default function App() {
  return (
    <div className={`${ARIAL} flex h-screen flex-col overflow-hidden bg-[#efefef]`}>
      <TitleBar />
      <Header />
      <div className="flex min-h-0 flex-1">
        <Panel />
        <Workspace />
      </div>
      <StatusBar />
      <Production />
      <div className="h-[10px] shrink-0 bg-[#adbe1a]" />
      <Taskbar />
    </div>
  );
}
